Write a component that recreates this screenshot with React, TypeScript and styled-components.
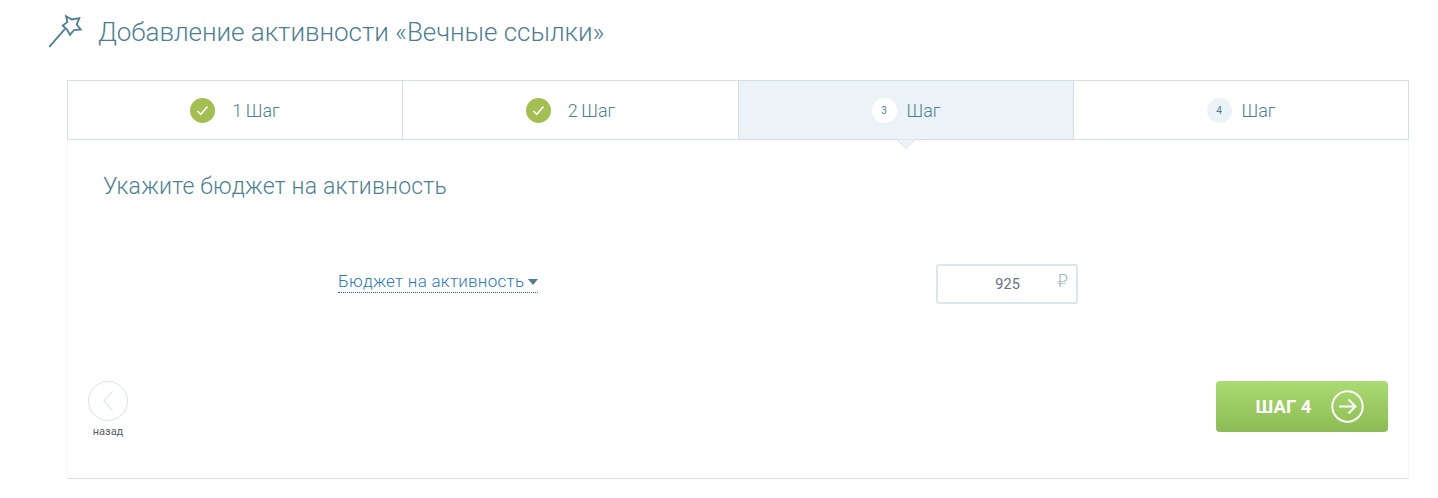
import React, { FunctionComponent } from 'react';
import styled, { createGlobalStyle } from 'styled-components';

const GlobalStyle = createGlobalStyle`
  html, body {
    margin: 0;
    background: #fff;
    font-family: Roboto, "Liberation Sans", sans-serif;
    font-weight: 300;
  }
`;

const Page = styled.div`
  width: 1438px;
  height: 498px;
  overflow: hidden;
  box-sizing: border-box;
  padding: 13px 29px 0 48px;
`;

const Header = styled.header`
  display: flex;
  align-items: center;
  gap: 15px;
  height: 36px;
  margin-bottom: 31px;
`;

const Title = styled.h1`
  margin: 2px 0 0;
  font-size: 26px;
  font-weight: 300;
  color: #4d7f92;
  letter-spacing: -0.05px;
  line-height: 36px;
`;

const Panel = styled.div`
  margin-left: 19px;
`;

const Steps = styled.ul`
  display: grid;
  grid-template-columns: 334px 336px 335px 1fr;
  height: 60px;
  box-sizing: border-box;
  margin: 0;
  padding: 0;
  list-style: none;
  border: 1px solid #d2dfe6;
`;

const Step = styled.li<{ $active?: boolean }>`
  position: relative;
  display: flex;
  align-items: center;
  justify-content: center;
  background: ${p => (p.$active ? '#ebf3f7' : '#fff')};
  & + & {
    border-left: 1px solid #d2dfe6;
  }
  ${p =>
    p.$active &&
    `
    &::after {
      content: '';
      position: absolute;
      left: 50%;
      bottom: -8px;
      width: 14px;
      height: 14px;
      background: #ebf3f7;
      border-right: 1px solid #d9e4ea;
      border-bottom: 1px solid #d9e4ea;
      transform: translateX(-50%) rotate(45deg) scale(0.95);
      clip-path: polygon(100% 0, 100% 100%, 0 100%);
    }
  `}
`;

const DoneBadge = styled.span`
  display: flex;
  align-items: center;
  justify-content: center;
  width: 25px;
  height: 25px;
  border-radius: 50%;
  background: #a3bf52;
  margin-right: 17px;
`;

const NumberBadge = styled.span<{ $active?: boolean }>`
  display: flex;
  align-items: center;
  justify-content: center;
  width: 25px;
  height: 25px;
  border-radius: 50%;
  background: ${p => (p.$active ? '#fff' : '#ebf3f7')};
  color: #4d7f92;
  font-size: 10px;
  font-weight: 400;
  margin-right: 10px;
`;

const StepLabel = styled.span`
  font-size: 18px;
  color: #4d7f92;
  word-spacing: -1px;
`;

const Body = styled.section`
  height: 339px;
  box-sizing: border-box;
  padding: 33px 20px 0 20px;
  border-left: 1px solid #f6f8f9;
  border-right: 1px solid #f6f8f9;
  border-bottom: 1px solid #d4dfe2;
`;

const SectionTitle = styled.h2`
  margin: 0 0 0 15px;
  font-size: 23px;
  line-height: 28px;
  font-weight: 300;
  color: #4d7f92;
  letter-spacing: 0.2px;
`;

const BudgetRow = styled.div`
  display: flex;
  align-items: flex-start;
  margin-top: 63px;
  height: 40px;
`;

const BudgetLabel = styled.a`
  display: flex;
  align-items: center;
  gap: 4px;
  margin: 6px 0 0 250px;
  height: 22px;
  font-size: 17px;
  font-weight: 300;
  letter-spacing: 0.27px;
  color: #2c79b5;
  border-bottom: 1px dotted #2c5f9e;
`;

const Caret = styled.span`
  width: 0;
  height: 0;
  margin-top: 2px;
  border-left: 5px solid transparent;
  border-right: 5px solid transparent;
  border-top: 6px solid #4d7f92;
`;

const AmountBox = styled.div`
  display: flex;
  justify-content: flex-end;
  box-sizing: border-box;
  width: 142px;
  height: 40px;
  margin-left: 398px;
  padding: 0 8px 0 0;
  border: 2px solid #dbe5ec;
  border-radius: 3px;
  background: #fff;
`;

const Amount = styled.span`
  font-size: 14.5px;
  font-weight: 400;
  color: #66727c;
  line-height: 38px;
  margin-right: 37px;
`;

const Currency = styled.span`
  font-family: "DejaVu Sans", sans-serif;
  font-size: 18px;
  color: #8fa6b4;
  line-height: 30px;
`;

const Footer = styled.div`
  display: flex;
  justify-content: space-between;
  align-items: flex-start;
  margin-top: 77px;
`;

const BackLink = styled.a`
  display: flex;
  flex-direction: column;
  align-items: center;
  gap: 5px;
`;

const BackCircle = styled.span`
  display: flex;
  align-items: center;
  justify-content: center;
  box-sizing: border-box;
  width: 40px;
  height: 40px;
  border-radius: 50%;
  border: 1px solid #d8e2e8;
`;

const BackLabel = styled.span`
  font-size: 11px;
  font-weight: 400;
  line-height: 12px;
  color: #55606a;
`;

const NextButton = styled.button`
  display: flex;
  align-items: center;
  justify-content: center;
  gap: 20px;
  width: 172px;
  height: 51px;
  padding: 0 0 0 16px;
  border: 0;
  border-radius: 4px;
  background: linear-gradient(#abdb73, #8dbb55);
  color: #fff;
  font-family: Roboto, "Liberation Sans", sans-serif;
  font-size: 18.5px;
  font-weight: 700;
`;

const Check: FunctionComponent = () => (
  <svg width="13" height="11" viewBox="0 0 13 11" fill="none" stroke="#fff" strokeWidth="1.6">
    <path d="M1.5 6l3.3 3.3L11.5 1.5" />
  </svg>
);

const Wand: FunctionComponent = () => (
  <svg width="35" height="35" viewBox="0 0 35 35" fill="none" stroke="#4d7f92" strokeWidth="1.8">
    <path d="M1.300 32.800L17 14.800" />
    <path d="M18 2.200L23.700 5.500L31.300 4.200L28.700 10.500L32.700 15.500L26 16L22 20.800L19 15.500L14.700 11.500L19.500 8Z" />
  </svg>
);

const Arrow: FunctionComponent = () => (
  <svg width="33" height="33" viewBox="0 0 33 33" fill="none" stroke="#fff" strokeWidth="2">
    <circle cx="16.500" cy="16.500" r="15.200" />
    <path d="M8 16.500h16.500M17.500 9.500l7 7-7 7" />
  </svg>
);

const BackChevron: FunctionComponent = () => (
  <svg width="10" height="20" viewBox="0 0 10 20" fill="none" stroke="#cfdbe2" strokeWidth="1">
    <path d="M9.500 0.500L0.700 10l8.800 9.500" />
  </svg>
);

const App: FunctionComponent = () => (
  <Page>
    <GlobalStyle />
    <Header>
      <Wand />
      <Title>Добавление активности «Вечные ссылки»</Title>
    </Header>
    <Panel>
      <Steps>
        <Step>
          <DoneBadge><Check /></DoneBadge>
          <StepLabel>1 Шаг</StepLabel>
        </Step>
        <Step>
          <DoneBadge><Check /></DoneBadge>
          <StepLabel>2 Шаг</StepLabel>
        </Step>
        <Step $active>
          <NumberBadge $active>3</NumberBadge>
          <StepLabel>Шаг</StepLabel>
        </Step>
        <Step>
          <NumberBadge>4</NumberBadge>
          <StepLabel>Шаг</StepLabel>
        </Step>
      </Steps>
      <Body>
        <SectionTitle>Укажите бюджет на активность</SectionTitle>
        <BudgetRow>
          <BudgetLabel>Бюджет на активность <Caret /></BudgetLabel>
          <AmountBox>
            <Amount>925</Amount>
            <Currency>₽</Currency>
          </AmountBox>
        </BudgetRow>
        <Footer>
          <BackLink>
            <BackCircle><BackChevron /></BackCircle>
            <BackLabel>назад</BackLabel>
          </BackLink>
          <NextButton>ШАГ 4 <Arrow /></NextButton>
        </Footer>
      </Body>
    </Panel>
  </Page>
);

export default App;
